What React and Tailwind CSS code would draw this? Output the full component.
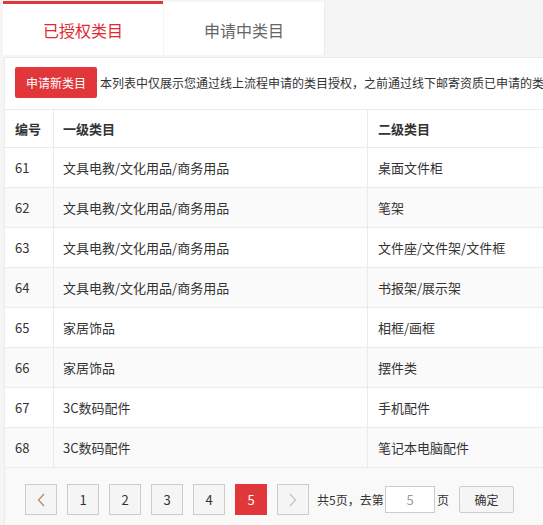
import React from "react";

const rows = [
  ["61", "文具电教/文化用品/商务用品", "桌面文件柜"],
  ["62", "文具电教/文化用品/商务用品", "笔架"],
  ["63", "文具电教/文化用品/商务用品", "文件座/文件架/文件框"],
  ["64", "文具电教/文化用品/商务用品", "书报架/展示架"],
  ["65", "家居饰品", "相框/画框"],
  ["66", "家居饰品", "摆件类"],
  ["67", "3C数码配件", "手机配件"],
  ["68", "3C数码配件", "笔记本电脑配件"],
];

export default function App() {
  return (
    <div
      className="w-[543px] h-[525px] overflow-hidden bg-[#f5f5f5] pl-[3px] pt-px text-[#333]"
      style={{ fontFamily: '"Microsoft YaHei", "Noto Sans CJK SC", sans-serif' }}
    >
      <div className="flex h-[54px]">
        <div className="w-[160px] h-[54px] bg-white border-t-[3px] border-[#e1363a] flex items-center justify-center text-[16px] text-[#e0282e]">
          已授权类目
        </div>
        <div className="w-[161px] h-[53px] mt-px ml-px bg-white border-r border-[#ebebeb] flex items-center justify-center text-[16px] text-[#666] pt-[2px]">
          申请中类目
        </div>
      </div>
      <div className="mt-[2px] ml-px bg-white border-l border-t border-[#ebebeb] w-[600px]">
        <div className="flex items-start h-[51px] pl-[10px] pt-[9px] whitespace-nowrap">
          <div className="shrink-0 w-[82px] h-[31px] rounded-[2px] bg-[#e1363a] text-white text-[12px] flex items-center justify-center">
            申请新类目
          </div>
          <div className="ml-[3px] h-[31px] flex items-center text-[12px] text-[#333]">
            本列表中仅展示您通过线上流程申请的类目授权，之前通过线下邮寄资质已申请的类
          </div>
        </div>
        <div className="border-t border-[#ebebeb]">
          <div className="flex h-[38px] border-b border-[#ebebeb] text-[13px] font-semibold">
            <div className="w-[49px] border-r border-[#ebebeb] pl-[10px] flex items-center">编号</div>
            <div className="w-[314px] border-r border-[#ebebeb] pl-[9px] flex items-center">一级类目</div>
            <div className="flex-1 pl-[10px] flex items-center">二级类目</div>
          </div>
          {rows.map((r, i) => (
            <div
              key={r[0]}
              className={`flex h-[40px] border-b border-[#ebebeb] text-[13px] ${i % 2 === 1 ? "bg-[#fafafa]" : "bg-white"}`}
            >
              <div className="w-[49px] border-r border-[#ebebeb] pl-[10px] flex items-center">{r[0]}</div>
              <div className="w-[314px] border-r border-[#ebebeb] pl-[9px] flex items-center">{r[1]}</div>
              <div className="flex-1 pl-[10px] flex items-center">{r[2]}</div>
            </div>
          ))}
        </div>
        <div className="bg-[#f9f9f9] h-[60px] pl-[20px] pt-[16px] flex items-start text-[13px]">
          <div className="flex items-center gap-[10px]">
            <div className="w-[32px] h-[31px] border border-[#ccc] bg-[#f5f5f5] flex items-center justify-center">
              <svg width="8" height="14" viewBox="0 0 8 14" fill="none">
                <path d="M7 1L1.5 7L7 13" stroke="#b9826a" strokeWidth="1.2" />
              </svg>
            </div>
            {["1", "2", "3", "4"].map((n) => (
              <div key={n} className="w-[32px] h-[31px] border border-[#ccc] bg-[#f5f5f5] flex items-center justify-center text-[13px]">
                {n}
              </div>
            ))}
            <div className="w-[32px] h-[31px] bg-[#e1363a] text-white flex items-center justify-center text-[13px]">5</div>
            <div className="w-[32px] h-[31px] border border-[#ccc] bg-[#f5f5f5] flex items-center justify-center">
              <svg width="8" height="14" viewBox="0 0 8 14" fill="none">
                <path d="M1 1L6.5 7L1 13" stroke="#c4c4c4" strokeWidth="1.2" />
              </svg>
            </div>
          </div>
          <div className="flex items-center h-[31px] ml-[8px] text-[12px] whitespace-nowrap">
            <span className="w-[66px]">共5页，去第</span>
            <div className="ml-[2px] w-[50px] h-[27px] border border-[#ccc] bg-white flex items-center justify-center text-[13px] text-[#999]">5</div>
            <span className="ml-[2px]">页</span>
            <div className="ml-[10px] w-[55px] h-[27px] border border-[#ccc] rounded-[2px] bg-[#f5f5f5] flex items-center justify-center">确定</div>
          </div>
        </div>
      </div>
    </div>
  );
}
